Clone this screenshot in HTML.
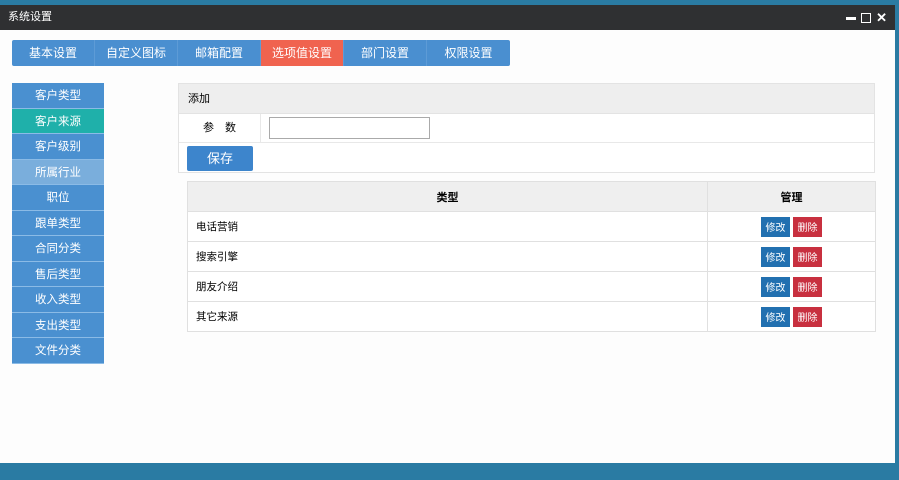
<!DOCTYPE html>
<html><head><meta charset="utf-8"><style>
*{margin:0;padding:0;box-sizing:border-box}
body{width:899px;height:480px;background:#2a7ba3;font-family:"Liberation Sans","Noto Sans CJK SC",sans-serif;position:relative;overflow:hidden}
.win{position:absolute;left:0;top:5px;width:895px;height:458px;background:#fdfdfd}
.title{height:25px;background:#2f3032;color:#fff;font-size:11px;line-height:25px;padding-left:8px}
.ctl{position:absolute;right:8px;top:5px;color:#fff;font-size:13px;font-weight:bold;display:flex;gap:5px;align-items:center}
.tabs{position:absolute;left:12px;top:35px;height:26px;display:flex;background:#4a8fd0;border-radius:2px}
.tabs div{width:83px;text-align:center;color:#fff;font-size:12px;line-height:26px;border-right:1px solid #5d9bd6}
.tabs .on{background:#f0634f}
.side{position:absolute;left:12px;top:78px;width:92px}
.side div{height:25.5px;display:flex;align-items:center;justify-content:center;background:#4a90d0;color:#fff;font-size:11.5px;border-bottom:1px solid #8bbbe6}
.side .on{background:#1fb0aa}
.side .lt{background:#7aaedc}
.form{position:absolute;left:178px;top:78px;width:697px;height:90px;border:1px solid #e3e3e3;background:#fff}
.fh{height:30px;background:#eeeeee;font-size:11px;line-height:30px;padding-left:9px;border-bottom:1px solid #e3e3e3}
.lab{position:absolute;left:0;top:30px;width:82px;height:29px;font-size:11px;line-height:29px;text-align:center;border-right:1px solid #e8e8e8;border-bottom:1px solid #e8e8e8}
.inp{position:absolute;left:90px;top:33px;width:161px;height:22px;border:1px solid #aaa;background:#fff}
.row2{position:absolute;left:82px;right:0;top:30px;height:29px;border-bottom:1px solid #e8e8e8}
.save{position:absolute;left:8px;top:62px;width:66px;height:25px;background:#3d85cc;color:#fff;font-size:13px;line-height:25px;text-align:center;border-radius:2px}
table{position:absolute;left:187px;top:181px;width:689px;border-collapse:collapse;font-size:10.5px;background:#fff}
td,th{border:1px solid #e0e0e0;height:30px}
th{background:#efefef;font-weight:bold;font-size:11px}
td{padding-left:8px}
td.m{text-align:center;padding:0}
.b{display:inline-flex;align-items:center;justify-content:center;width:29px;height:20px;color:#fff;font-size:10px;vertical-align:middle}
.e{background:#2270b0}.d{background:#c8303f;margin-left:3px}
</style></head><body>
<div class="win">
<div class="title">系统设置</div>
<div class="ctl"><span style="display:inline-block;width:10px;height:3px;background:#fff"></span><span style="display:inline-block;width:10px;height:10px;border:1.5px solid #fff"></span><span>✕</span></div>
<div class="tabs"><div>基本设置</div><div>自定义图标</div><div>邮箱配置</div><div class="on">选项值设置</div><div>部门设置</div><div style="border:none">权限设置</div></div>
<div class="side"><div>客户类型</div><div class="on">客户来源</div><div>客户级别</div><div class="lt">所属行业</div><div>职位</div><div>跟单类型</div><div>合同分类</div><div>售后类型</div><div>收入类型</div><div>支出类型</div><div>文件分类</div></div>
<div class="form"><div class="fh">添加</div><div class="lab">参　数</div><div class="row2"></div><div class="inp"></div><div class="save">保存</div></div>
</div>
<table>
<tr><th style="width:520px">类型</th><th>管理</th></tr>
<tr><td>电话营销</td><td class="m"><span class="b e">修改</span><span class="b d">删除</span></td></tr>
<tr><td>搜索引擎</td><td class="m"><span class="b e">修改</span><span class="b d">删除</span></td></tr>
<tr><td>朋友介绍</td><td class="m"><span class="b e">修改</span><span class="b d">删除</span></td></tr>
<tr><td>其它来源</td><td class="m"><span class="b e">修改</span><span class="b d">删除</span></td></tr>
</table>
</body></html>
